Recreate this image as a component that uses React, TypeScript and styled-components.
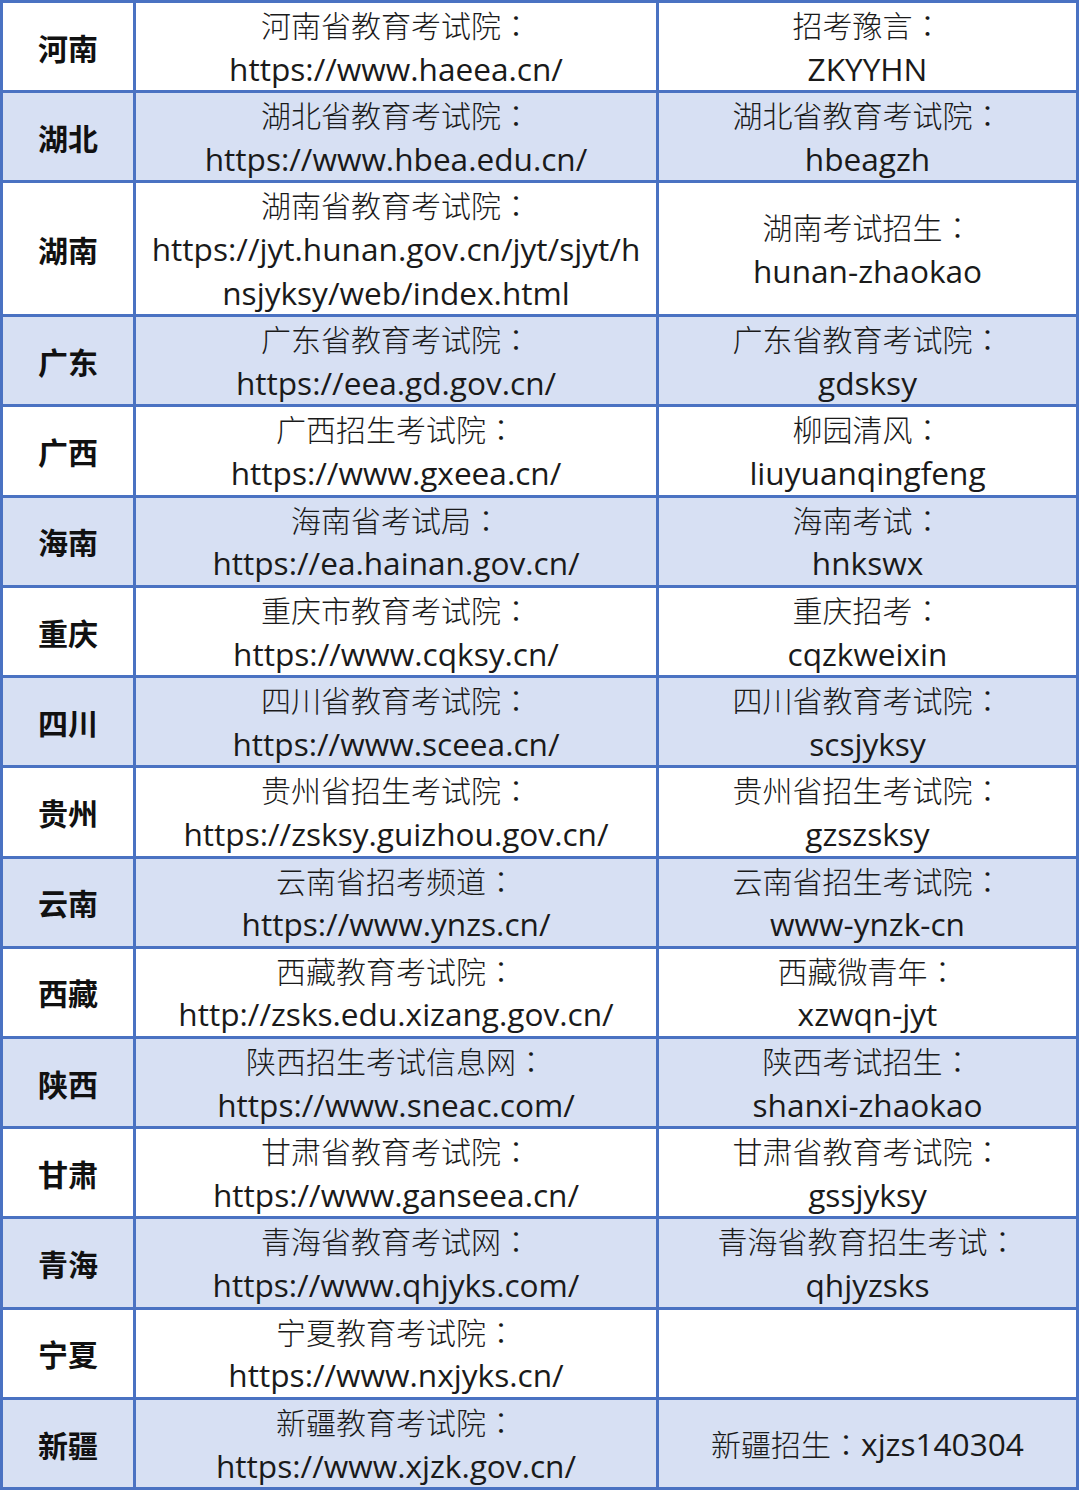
import React from "react";
import styled, { createGlobalStyle } from "styled-components";

// 各省考试院网站 + 公众号
type Row = {
  province: string;
  siteName: string;
  url: string[];
  wechatName?: string;
  wechatId?: string;
  inline?: boolean;
};

const rows: Row[] = [
  { province: "河南", siteName: "河南省教育考试院", url: ["https://www.haeea.cn/"], wechatName: "招考豫言", wechatId: "ZKYYHN" },
  { province: "湖北", siteName: "湖北省教育考试院", url: ["https://www.hbea.edu.cn/"], wechatName: "湖北省教育考试院", wechatId: "hbeagzh" },
  {
    province: "湖南",
    siteName: "湖南省教育考试院",
    url: ["https://jyt.hunan.gov.cn/jyt/sjyt/h", "nsjyksy/web/index.html"],
    wechatName: "湖南考试招生",
    wechatId: "hunan-zhaokao",
  },
  { province: "广东", siteName: "广东省教育考试院", url: ["https://eea.gd.gov.cn/"], wechatName: "广东省教育考试院", wechatId: "gdsksy" },
  { province: "广西", siteName: "广西招生考试院", url: ["https://www.gxeea.cn/"], wechatName: "柳园清风", wechatId: "liuyuanqingfeng" },
  { province: "海南", siteName: "海南省考试局", url: ["https://ea.hainan.gov.cn/"], wechatName: "海南考试", wechatId: "hnkswx" },
  { province: "重庆", siteName: "重庆市教育考试院", url: ["https://www.cqksy.cn/"], wechatName: "重庆招考", wechatId: "cqzkweixin" },
  { province: "四川", siteName: "四川省教育考试院", url: ["https://www.sceea.cn/"], wechatName: "四川省教育考试院", wechatId: "scsjyksy" },
  { province: "贵州", siteName: "贵州省招生考试院", url: ["https://zsksy.guizhou.gov.cn/"], wechatName: "贵州省招生考试院", wechatId: "gzszsksy" },
  { province: "云南", siteName: "云南省招考频道", url: ["https://www.ynzs.cn/"], wechatName: "云南省招生考试院", wechatId: "www-ynzk-cn" },
  { province: "西藏", siteName: "西藏教育考试院", url: ["http://zsks.edu.xizang.gov.cn/"], wechatName: "西藏微青年", wechatId: "xzwqn-jyt" },
  { province: "陕西", siteName: "陕西招生考试信息网", url: ["https://www.sneac.com/"], wechatName: "陕西考试招生", wechatId: "shanxi-zhaokao" },
  { province: "甘肃", siteName: "甘肃省教育考试院", url: ["https://www.ganseea.cn/"], wechatName: "甘肃省教育考试院", wechatId: "gssjyksy" },
  { province: "青海", siteName: "青海省教育考试网", url: ["https://www.qhjyks.com/"], wechatName: "青海省教育招生考试", wechatId: "qhjyzsks" },
  { province: "宁夏", siteName: "宁夏教育考试院", url: ["https://www.nxjyks.cn/"] },
  { province: "新疆", siteName: "新疆教育考试院", url: ["https://www.xjzk.gov.cn/"], wechatName: "新疆招生", wechatId: "xjzs140304", inline: true },
];

const GlobalStyle = createGlobalStyle`
  html, body {
    margin: 0;
    padding: 0;
    background: #ffffff;
  }
  body {
    font-family: "Noto Sans CJK SC", sans-serif;
    color: #1a1a1a;
  }
`;

const Page = styled.div`
  width: 1080px;
  height: 1495px;
  background: #ffffff;
  overflow: hidden;
`;

const Table = styled.table`
  width: 1079px;
  border-collapse: collapse;
  table-layout: fixed;
  border: 3px solid #4a72c2;
`;

const Tr = styled.tr<{ $shaded: boolean }>`
  background: ${(p) => (p.$shaded ? "#d7e0f3" : "#ffffff")};
`;

const Cell = styled.td`
  border: 3px solid #4a72c2;
  padding: 0;
  text-align: center;
  vertical-align: middle;
  white-space: nowrap;
`;

const ProvinceCell = styled(Cell)`
  font-weight: 700;
  font-size: 30px;
  color: #111;
`;

const Line = styled.div`
  height: 43.62px;
  line-height: 43.62px;
  overflow: visible;
`;

const Label = styled.span`
  font-family: "Noto Sans CJK SC", sans-serif;
  font-size: 30px;
  font-weight: 300;
`;

// 居中的全角冒号
const Colon = styled.span`
  font-family: "Noto Sans CJK TC", sans-serif;
  font-size: 30px;
  font-weight: 300;
`;

const Latin = styled.span`
  font-family: "Open Sans", "Noto Sans", sans-serif;
  font-size: 31.6px;
`;

export default function App() {
  return (
    <Page>
      <GlobalStyle />
      <Table>
        <colgroup>
          <col style={{ width: 133 }} />
          <col style={{ width: 523 }} />
          <col />
        </colgroup>
        <tbody>
          {rows.map((r, i) => (
            <Tr key={r.province} $shaded={i % 2 === 1}>
              <ProvinceCell>{r.province}</ProvinceCell>
              <Cell>
                <Line>
                  <Label>{r.siteName}</Label>
                  <Colon>：</Colon>
                </Line>
                {r.url.map((u) => (
                  <Line key={u}>
                    <Latin>{u}</Latin>
                  </Line>
                ))}
              </Cell>
              <Cell>
                {r.wechatName &&
                  (r.inline ? (
                    <Line>
                      <Label>{r.wechatName}</Label>
                      <Colon>：</Colon>
                      <Latin>{r.wechatId}</Latin>
                    </Line>
                  ) : (
                    <>
                      <Line>
                        <Label>{r.wechatName}</Label>
                        <Colon>：</Colon>
                      </Line>
                      <Line>
                        <Latin>{r.wechatId}</Latin>
                      </Line>
                    </>
                  ))}
              </Cell>
            </Tr>
          ))}
        </tbody>
      </Table>
    </Page>
  );
}
